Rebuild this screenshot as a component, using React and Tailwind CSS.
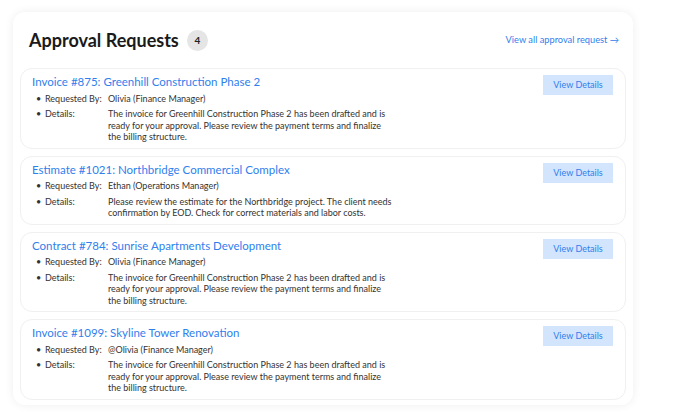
const REQUESTS = [
  {
    title: "Invoice #875: Greenhill Construction Phase 2",
    by: "Olivia (Finance Manager)",
    details:
      "The invoice for Greenhill Construction Phase 2 has been drafted and is ready for your approval. Please review the payment terms and finalize the billing structure.",
  },
  {
    title: "Estimate #1021: Northbridge Commercial Complex",
    by: "Ethan (Operations Manager)",
    details:
      "Please review the estimate for the Northbridge project. The client needs confirmation by EOD. Check for correct materials and labor costs.",
  },
  {
    title: "Contract #784: Sunrise Apartments Development",
    by: "Olivia (Finance Manager)",
    details:
      "The invoice for Greenhill Construction Phase 2 has been drafted and is ready for your approval. Please review the payment terms and finalize the billing structure.",
  },
  {
    title: "Invoice #1099: Skyline Tower Renovation",
    by: "@Olivia (Finance Manager)",
    details:
      "The invoice for Greenhill Construction Phase 2 has been drafted and is ready for your approval. Please review the payment terms and finalize the billing structure.",
  },
];

const Row = ({ label, children }) => (
  <li className="flex">
    <span className="w-[72px] shrink-0 flex">
      <span className="w-[9px]">•</span>
      {label}
    </span>
    <span className="w-[284px]">{children}</span>
  </li>
);

export default function App() {
  return (
    <div
      className="w-[683px] h-[417px] bg-white pt-3 pl-[13px]"
      style={{ fontFamily: "Lato, 'Noto Sans', sans-serif" }}
    >
      <div className="w-[620px] bg-white rounded-xl shadow-[0_0_10px_rgba(0,0,0,0.07)] px-[7px] pb-[5px]">
        {/* header */}
        <div className="h-[56px] flex items-center justify-between pl-[9px] pr-[7px]">
          <div className="flex items-center">
            <h1 className="text-[18px] font-bold text-[#1a1a1a]">Approval Requests</h1>
            <span className="ml-[8px] w-[21px] h-[21px] rounded-full bg-[#e5e5e5] flex items-center justify-center text-[10px] font-bold text-[#222]">
              4
            </span>
          </div>
          <a href="#" className="text-[9.25px] text-[#2f80ed]">
            View all approval request →
          </a>
        </div>

        {/* request list */}
        <div className="flex flex-col gap-[7px]">
          {REQUESTS.map((r) => (
            <div
              key={r.title}
              className="border border-[#f0f0f0] rounded-xl pl-[11px] pr-[12px] pt-[4px] pb-[5px] flex justify-between"
            >
              <div>
                <div className="text-[11.5px] leading-[17px] text-[#2f80ed]">{r.title}</div>
                <ul className="mt-[2.5px] pl-[4px] text-[9px] leading-[11.5px] text-[#333] flex flex-col gap-[4px]">
                  <Row label="Requested By:">{r.by}</Row>
                  <Row label="Details:">{r.details}</Row>
                </ul>
              </div>
              <button className="mt-[2px] w-[70px] h-[20px] bg-[#d3e5fd] text-[#2f80ed] text-[9px] leading-[20px]">
                View Details
              </button>
            </div>
          ))}
        </div>
      </div>
    </div>
  );
}
